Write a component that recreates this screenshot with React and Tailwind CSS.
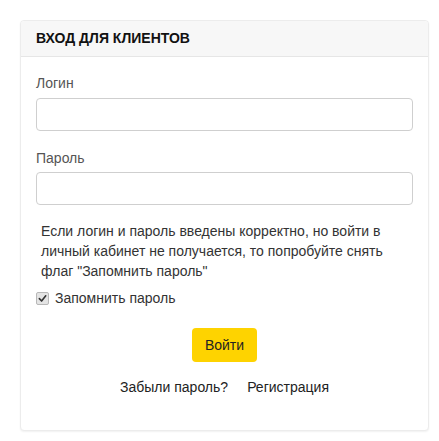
export default function App() {
  return (
    <div className="min-h-[441px] bg-white pt-[20px] pl-[20px] pr-[10px] pb-[12px] font-['Liberation_Sans',Arial,sans-serif]">
      <div className="rounded-[4px] border border-[#ececec] bg-white shadow-[0_1px_2px_rgba(0,0,0,0.06)]">
        {/* Header */}
        <div className="flex h-[36px] items-center rounded-t-[4px] border-b border-[#e6e6e6] bg-[#f7f7f7] px-[15px]">
          <span className="text-[14px] font-bold uppercase text-[#111]">Вход для клиентов</span>
        </div>

        {/* Form */}
        <div className="px-[15px] pt-[18px] pb-[35px]">
          <label className="block text-[14px] leading-[16px] text-[#555]">Логин</label>
          <input
            type="text"
            className="mt-[7px] block h-[33px] w-full rounded-[4px] border border-[#cfcfcf] px-[8px] text-[13px] outline-none"
          />

          <label className="mt-[19px] block text-[14px] leading-[16px] text-[#555]">Пароль</label>
          <input
            type="password"
            className="mt-[6px] block h-[33px] w-full rounded-[4px] border border-[#cfcfcf] px-[8px] text-[13px] outline-none"
          />

          <p className="mt-[16px] pl-[5px] pr-[3px] text-[14px] leading-[20px] text-[#333]">
            Если логин и пароль введены корректно, но войти в личный кабинет не получается, то попробуйте снять флаг "Запомнить пароль"
          </p>

          <label className="mt-[7px] flex h-[20px] items-center gap-[6px] text-[14px] text-[#333]">
            <span className="flex h-[13px] w-[13px] items-center justify-center rounded-[2px] border border-[#b8b8b8] bg-[#e4e4e4]">
              <svg viewBox="0 0 10 10" className="h-[9px] w-[9px]">
                <path d="M1.5 5.2 L4 7.8 L8.6 2" fill="none" stroke="#333" strokeWidth="1.8" strokeLinecap="round" strokeLinejoin="round" />
              </svg>
            </span>
            <span>Запомнить пароль</span>
          </label>

          <div className="mt-[20px] flex justify-center">
            <button className="h-[34px] rounded-[4px] bg-[#fed300] px-[13px] text-[14px] text-[#222]">
              Войти
            </button>
          </div>

          <div className="mt-[17px] flex justify-center gap-[19px] text-[14px] leading-[16px] text-[#222]">
            <a href="#" className="hover:underline">Забыли пароль?</a>
            <a href="#" className="hover:underline">Регистрация</a>
          </div>
        </div>
      </div>
    </div>
  );
}
